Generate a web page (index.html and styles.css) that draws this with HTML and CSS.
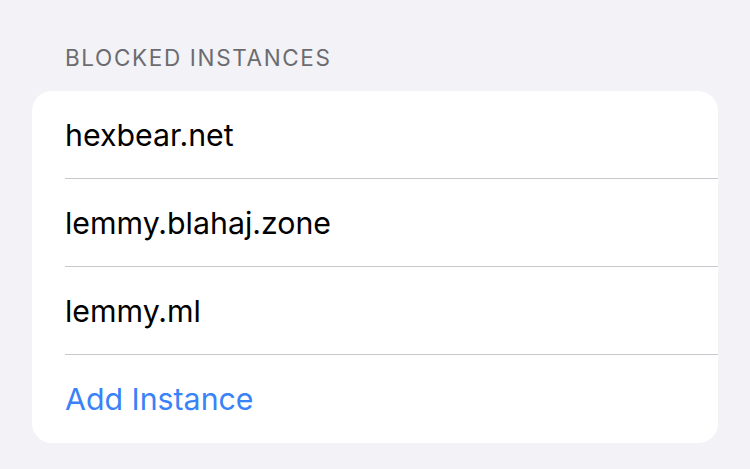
FILE: index.html
```html
<!DOCTYPE html>
<html>
<head>
<title> Blocked Instances </title>
<link rel="stylesheet" href="styles.css">
</head>
<body>
<div class="section">
	<h3 class="section-title"> BLOCKED INSTANCES </h3>
	<div class="list">
		<div class="row"><span class="label">hexbear.net</span></div>
		<div class="row"><span class="label">lemmy.blahaj.zone</span></div>
		<div class="row"><span class="label">lemmy.ml</span></div>
		<div class="row last"><span class="label action">Add Instance</span></div>
	</div>
</div>
</body>
</html>
```

FILE: styles.css
```css
body { margin: 0; background-color: #f2f2f7; font-family: "Inter", "Liberation Sans", sans-serif; -webkit-font-smoothing: antialiased; }
.section { padding: 40px 32px 0 32px; }
.section-title { margin: 0; padding-left: 33px; height: 51px; font-size: 22.5px; font-weight: normal; line-height: 36px; color: #6c6c70; letter-spacing: 1.65px; }
.list { background-color: white; border-radius: 20px; }
.row { margin-left: 33px; height: 87px; border-bottom: 1px solid #c8c8cc; display: flex; align-items: center; }
.row.last { border-bottom: none; height: 88px; }
.label { font-size: 30.3px; color: black; }
.action { color: #3a82f7; }
```
